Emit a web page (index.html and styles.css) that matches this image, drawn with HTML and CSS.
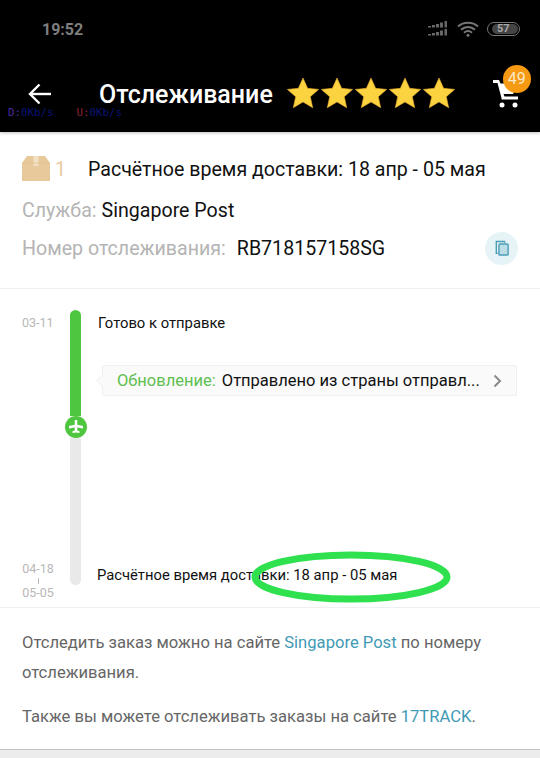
FILE: index.html
```html
<!DOCTYPE html>
<html lang="ru">
<head>
    <meta charset="UTF-8">
    <meta name="viewport" content="width=device-width, initial-scale=1.0">
    <title>Отслеживание</title>
    <link rel="stylesheet" href="styles.css">
</head>
<body>

<div class="top">
    <div class="status-bar">
        <span class="time">19:52</span>
        <div class="status-icons">
            <svg width="20" height="16" viewBox="0 0 20 16" fill="#666">
                <rect x="0" y="5" width="3" height="1.500"/><rect x="4" y="4" width="3" height="2.500"/><rect x="8" y="3" width="3" height="3.500"/><rect x="12" y="1.500" width="3" height="5"/><rect x="16.500" y="0" width="2.500" height="6.500"/>
                <rect x="0" y="13" width="3" height="1.500"/><rect x="4" y="12" width="3" height="2.500"/><rect x="8" y="11" width="3" height="3.500"/><rect x="12" y="9.500" width="3" height="5"/><rect x="16.500" y="8" width="2.500" height="6.500"/>
            </svg>
            <svg class="wifi" width="22" height="16" viewBox="0 0 22 16" fill="none" stroke="#777" stroke-width="2">
                <path d="M1 5.500C6.500 .5 15.500 .5 21 5.500"/>
                <path d="M4 8.800C8 5 14 5 18 8.800"/>
                <path d="M7 11.800C9.500 9.600 12.500 9.600 15 11.800"/>
                <circle cx="11" cy="14.300" r="1.500" fill="#777" stroke="none"/>
            </svg>
            <div class="battery"><span class="battery-level">57</span></div>
        </div>
    </div>
    <div class="app-bar">
        <svg class="back" width="23" height="22" viewBox="0 0 23 22" fill="none" stroke="#fff" stroke-width="2.400">
            <path d="M23 11H2.500"/>
            <path d="M11.500 1.500 2 11l9.500 9.500"/>
        </svg>
        <span class="title">Отслеживание</span>
        <div class="stars">
            <svg class="star" viewBox="0 0 32 32"><path d="M16 1l4.600 10.300 11 1.100-8.300 7.300 2.400 11L16 24.900 6.300 30.700l2.400-11L.4 12.400l11-1.100z"/></svg>
            <svg class="star" viewBox="0 0 32 32"><path d="M16 1l4.600 10.300 11 1.100-8.300 7.300 2.400 11L16 24.900 6.300 30.700l2.400-11L.4 12.400l11-1.100z"/></svg>
            <svg class="star" viewBox="0 0 32 32"><path d="M16 1l4.600 10.300 11 1.100-8.300 7.300 2.400 11L16 24.900 6.300 30.700l2.400-11L.4 12.400l11-1.100z"/></svg>
            <svg class="star" viewBox="0 0 32 32"><path d="M16 1l4.600 10.300 11 1.100-8.300 7.300 2.400 11L16 24.900 6.300 30.700l2.400-11L.4 12.400l11-1.100z"/></svg>
            <svg class="star" viewBox="0 0 32 32"><path d="M16 1l4.600 10.300 11 1.100-8.300 7.300 2.400 11L16 24.900 6.300 30.700l2.400-11L.4 12.400l11-1.100z"/></svg>
        </div>
        <div class="cart">
            <svg width="26" height="28" viewBox="0 0 26 28" fill="#fff">
                <path d="M0 0h6l1.500 3.500H25L20 14H10.500l1 2.500H25v3H8.500V18L4.500 3H0z"/>
                <circle cx="9" cy="25" r="2.500"/>
                <circle cx="22" cy="25" r="2.500"/>
            </svg>
            <span class="badge">49</span>
        </div>
    </div>
    <div class="speed">
        <span><b class="speed-d">D:</b>0Kb/s</span>
        <span><b class="speed-u">U:</b>0Kb/s</span>
    </div>
</div>

<section class="summary">
    <div class="summary-row">
        <svg class="box" width="28" height="25" viewBox="0 0 28 25">
            <path d="M5 0h18l5 7v18H0V7z" fill="#e8c99b"/>
            <path d="M11.500 0h5v10h-5z" fill="#f2e0c4"/>
            <path d="M0 7h28" stroke="#dfbc88" stroke-width=".6"/>
        </svg>
        <span class="count">1</span>
        <span class="eta">Расчётное время доставки: 18 апр - 05 мая</span>
    </div>
    <div class="summary-row">
        <span class="label">Служба:</span><span class="value service">Singapore Post</span>
    </div>
    <div class="summary-row summary-number">
        <span class="label">Номер отслеживания:</span><span class="value number">RB718157158SG</span>
        <div class="copy">
            <svg width="14" height="16" viewBox="0 0 16 18" fill="none" stroke="#4a9fb8" stroke-width="1.600">
                <path d="M3 15H1.500V1.500H11V3"/>
                <rect x="4.500" y="4.500" width="10.500" height="12.500" rx="1" fill="#bcdce6"/>
            </svg>
        </div>
    </div>
</section>

<section class="timeline">
    <div class="dates">
        <span>03-11</span>
        <div class="date-range">
            <span>04-18</span>
            <i class="date-dash"></i>
            <span>05-05</span>
        </div>
    </div>
    <div class="rail">
        <div class="rail-done"></div>
        <div class="rail-node">
            <svg width="14" height="14" viewBox="0 0 14 14" fill="#fff">
                <path d="M5.700 0h2.600v4.800L14 6v2.400L8.300 7.500v3l2.200 .8V13L7 12.500 3.500 13v-1.700l2.200-.8v-3L0 8.400V6l5.700-1.200z"/>
            </svg>
        </div>
        <div class="rail-left"></div>
    </div>
    <div class="events">
        <div class="event-top">
            <p class="event-title">Готово к отправке</p>
            <div class="update">
                <span class="update-label">Обновление:</span>
                <span class="update-text">Отправлено из страны отправл...</span>
                <svg class="chevron" width="9" height="14" viewBox="0 0 9 14" fill="none" stroke="#8a8a8a" stroke-width="2">
                    <path d="M1.500 1.500 7 7l-5.500 5.500"/>
                </svg>
            </div>
        </div>
        <p class="event-title event-last">Расчётное время доставки: 18 апр - 05 мая</p>
    </div>
    <svg class="circle-mark" width="204" height="54" viewBox="0 0 204 54" fill="none">
        <ellipse cx="102" cy="27" rx="96" ry="22" stroke="#2fe04f" stroke-width="7"/>
    </svg>
</section>

<section class="notes">
    <p>Отследить заказ можно на сайте <a href="#">Singapore Post</a> по номеру отслеживания.</p>
    <p>Также вы можете отслеживать заказы на сайте <a href="#">17TRACK</a>.</p>
</section>

<div class="bottom"></div>

</body>
</html>
```

FILE: styles.css
```css
html, body {
    margin: 0;
    height: 100%;
}
body {
    font-family: Roboto, "Liberation Sans", sans-serif;
    background: #fff;
    color: #111;
    width: 540px;
    height: 758px;
    overflow: hidden;
    display: flex;
    flex-direction: column;
}
p {
    margin: 0;
}
.top {
    background: #000;
    height: 132px;
    flex: none;
    position: relative;
    box-shadow: 0 1px 3px rgba(0, 0, 0, 0.25);
}
.status-bar {
    height: 58px;
    display: flex;
    align-items: center;
    justify-content: space-between;
    padding: 0 20px 0 42px;
}
.time {
    font-size: 16px;
    font-weight: 700;
    color: #7e7e7e;
}
.status-icons {
    display: flex;
    align-items: center;
    gap: 9px;
}
.wifi {
    margin-right: -1px;
}
.battery {
    width: 33px;
    height: 14px;
    box-sizing: border-box;
    border: 1px solid #777;
    border-radius: 7px;
    padding: 1px;
    display: flex;
    justify-content: flex-end;
}
.battery-level {
    display: block;
    width: 26px;
    height: 10px;
    line-height: 10px;
    background: #444;
    border-radius: 5px;
    padding-left: 5px;
    box-sizing: border-box;
    font-size: 11px;
    font-weight: 700;
    color: #aaa;
}
.app-bar {
    height: 74px;
    display: flex;
    align-items: center;
    padding: 0 0 0 28px;
}
.back {
    margin-top: -2px;
}
.title {
    margin-left: 48px;
    font-size: 25px;
    font-weight: 500;
    line-height: 28px;
    color: #fff;
}
.stars {
    display: flex;
    margin-left: 14px;
    margin-top: -4px;
    gap: 2px;
}
.star {
    width: 32px;
    height: 32px;
    fill: #fbd23f;
    stroke: #eeb02c;
    stroke-width: 0.6;
}
.cart {
    margin-left: 38px;
    position: relative;
    display: flex;
    margin-top: -2px;
}
.badge {
    position: absolute;
    left: 10px;
    top: -15px;
    width: 28px;
    height: 28px;
    border-radius: 50%;
    background: #f59a12;
    color: #fde9c8;
    font-size: 16px;
    line-height: 28px;
    text-align: center;
}
.speed {
    position: absolute;
    left: 8px;
    top: 107px;
    display: flex;
    gap: 23px;
    font-family: "DejaVu Sans Mono", monospace;
    font-size: 10.800px;
    line-height: 12px;
    color: #0a1478;
}
.speed b {
    font-weight: 400;
}
.speed-d {
    color: #4a2aa0;
}
.speed-u {
    color: #8c1f35;
}

.summary {
    height: 157px;
    flex: none;
    box-sizing: border-box;
    border-bottom: 1px solid #f0f0f0;
    padding: 23px 22px 0;
    display: flex;
    flex-direction: column;
}
.summary-row {
    display: flex;
    align-items: center;
    height: 28px;
    margin-bottom: 13px;
    font-size: 19.600px;
    white-space: nowrap;
}
.summary-number {
    margin-top: -3px;
}
.box {
    margin-top: -2px;
}
.count {
    margin-left: 5px;
    color: #e8cda4;
    width: 28px;
}
.eta {
    margin-left: 5px;
}
.label {
    color: #b4b4b4;
}
.service {
    margin-left: 5px;
}
.number {
    margin-left: 11px;
}
.copy {
    margin-left: auto;
    width: 33px;
    height: 33px;
    flex: none;
    border-radius: 50%;
    background: #e6f3f7;
    display: flex;
    align-items: center;
    justify-content: center;
}

.timeline {
    height: 319px;
    flex: none;
    box-sizing: border-box;
    border-bottom: 1px solid #f0f0f0;
    padding: 21px 0 7px 22px;
    display: flex;
    position: relative;
}
.dates {
    width: 32px;
    display: flex;
    flex-direction: column;
    justify-content: space-between;
    font-size: 12.500px;
    line-height: 14px;
    color: #b8b8b8;
    padding-top: 6px;
}
.date-range {
    display: flex;
    flex-direction: column;
    align-items: center;
    gap: 2px;
}
.date-dash {
    width: 1px;
    height: 6px;
    background: #bbb;
}
.rail {
    width: 11px;
    margin-left: 16px;
    height: 275px;
    display: flex;
    flex-direction: column;
    align-items: center;
}
.rail-done {
    width: 11px;
    height: 106px;
    background: #4fc63f;
    border-radius: 6px 6px 0 0;
}
.rail-node {
    width: 22px;
    height: 22px;
    flex: none;
    border-radius: 50%;
    background: #4fc63f;
    display: flex;
    align-items: center;
    justify-content: center;
    z-index: 1;
}
.rail-left {
    width: 11px;
    flex: 1;
    background: #e9e9e9;
    border-radius: 0 0 6px 6px;
}
.events {
    flex: 1;
    margin-left: 16px;
    display: flex;
    flex-direction: column;
    justify-content: space-between;
    font-size: 14.800px;
}
.event-title {
    line-height: 24px;
    white-space: nowrap;
}
.event-top .event-title {
    margin-left: 1px;
    margin-top: 1px;
}
.event-last {
    margin-bottom: 13px;
}
.update {
    position: relative;
    margin: 30px 23px 0 5px;
    height: 31px;
    box-sizing: border-box;
    background: #fafafa;
    border: 1px solid #f0f0f0;
    border-radius: 2px;
    display: flex;
    align-items: center;
    padding: 0 14px 0 14px;
    font-size: 16.500px;
    white-space: nowrap;
}
.update::before {
    content: "";
    position: absolute;
    left: -5px;
    top: 10px;
    width: 8px;
    height: 8px;
    background: #fafafa;
    border-left: 1px solid #f0f0f0;
    border-bottom: 1px solid #f0f0f0;
    transform: rotate(45deg);
}
.update-label {
    color: #5fbf50;
}
.update-text {
    margin-left: 6px;
}
.chevron {
    margin-left: auto;
}
.circle-mark {
    position: absolute;
    left: 249px;
    top: 261px;
}

.notes {
    flex: 1;
    box-sizing: border-box;
    padding: 20px 22px 0;
    font-size: 16.600px;
    line-height: 30px;
    color: #666;
    border-bottom: 1px solid #c4c4c4;
}
.notes p {
    margin-bottom: 14px;
}
.notes a {
    color: #3f9ab5;
    text-decoration: none;
}
.bottom {
    height: 8px;
    flex: none;
    background: #ececec;
}
```
